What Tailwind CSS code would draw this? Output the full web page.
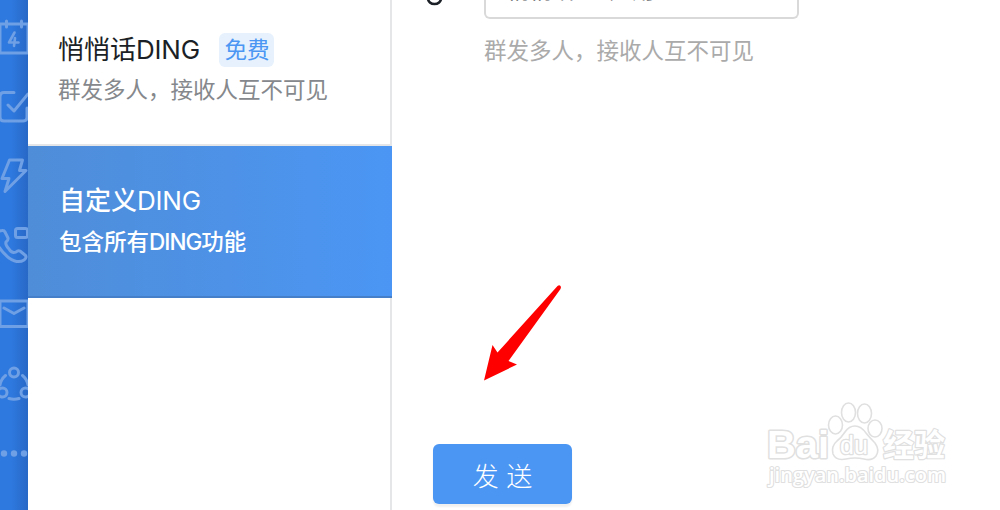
<!DOCTYPE html>
<html lang="zh-CN">
<head>
    <meta charset="UTF-8">
    <meta name="viewport" content="width=device-width, initial-scale=1.0">
    <title>DING</title>
    <script src="https://cdn.jsdelivr.net/npm/@tailwindcss/browser@4"></script>
</head>
<body class="relative flex h-[510px] w-[1000px] overflow-hidden bg-white font-['Inter','Noto_Sans_CJK_SC',sans-serif]">

    <!-- icon rail -->
    <nav class="h-full w-7 shrink-0 overflow-hidden bg-linear-to-r from-[#2e79df] from-40% to-[#2868c6]">
        <svg class="h-[510px] w-7" viewBox="0 0 28 510" fill="none" stroke="#6f9fe4" stroke-width="3" stroke-linecap="round" stroke-linejoin="round">
            <!-- calendar -->
            <path d="M0 24H28M0 53H28M0 24V53M28 24V53M6.500 21V27M21.500 21V27"/>
            <path d="M14.500 32.500L9 42.500H18.500M15 38L14 46" stroke-width="2.600"/>
            <!-- todo -->
            <path d="M14 92.500H4Q0 92.500 0 97V117Q0 121 4 121H23Q27 121 27 117V108M8 105L14 111L28 94"/>
            <!-- ding -->
            <path d="M9.500 160H22.500L19.500 170.500H26L5 191.500L9 178.500H2Z"/>
            <!-- phone -->
            <rect x="15.500" y="228.500" width="12" height="9" rx="2"/>
            <path d="M-3 231.500L2 230.500Q4 230 5 232L8 238Q8.500 240 6 242Q5 245 9 249Q12 254 16 252Q18 250 20 251L25.500 255.500Q27 257.500 24 260Q18 264 9 258Q3 253 -1 247"/>
            <!-- mail -->
            <path d="M0 301H28M0 326.500H28M0 301V326M28 301V326M4 308L14 313.500L24 308"/>
            <!-- contacts -->
            <circle cx="14" cy="372.500" r="4.500"/>
            <circle cx="2.500" cy="392.500" r="4.500"/>
            <circle cx="25.500" cy="392.500" r="4.500"/>
            <path d="M5.500 375.500Q1 379 0 385M22.500 375.500Q27 379 28 385M9 398.500Q14 400 19 398.500"/>
            <g fill="#6f9fe4" stroke="none">
                <circle cx="4" cy="453.500" r="3.200"/>
                <circle cx="14" cy="453.500" r="3.200"/>
                <circle cx="24" cy="453.500" r="3.200"/>
            </g>
        </svg>
    </nav>

    <!-- DING types -->
    <aside class="flex h-full w-[364px] shrink-0 flex-col">
        <div class="h-[146px] border-r-2 border-b-2 border-[#e4e6e8] pt-[30px] pl-[30px]">
            <div class="flex h-10 items-center">
                <h2 class="w-[161px] text-[26px] leading-10 whitespace-nowrap text-[#1b1f26]">悄悄话<span class="tracking-[-0.2px]">DING</span></h2>
                <span class="flex h-[34px] w-[55px] items-center justify-center rounded-md bg-[#e6f1fd] pl-px text-[22.500px] text-[#4b96f3]">免费</span>
            </div>
            <p class="mt-1 text-[22.500px] leading-8 text-[#85888c]">群发多人，接收人互不可见</p>
        </div>
        <div class="h-[152px] border-b-2 border-[#467fc9] bg-linear-to-r from-[#4f8dd8] to-[#4b96f4] pt-[35px] pl-[31px] text-white">
            <h2 class="text-[26px] leading-10 font-medium">自定义<span class="font-normal tracking-[-0.2px]">DING</span></h2>
            <p class="text-[22.500px] leading-[42px] font-medium">包含所有<span class="tracking-[-1px]">DING</span>功能</p>
        </div>
        <div class="flex-1 border-r-2 border-[#e4e6e8]"></div>
    </aside>

    <!-- form -->
    <main class="flex h-full flex-1 flex-col">
        <div class="flex h-[19px] items-end">
            <svg class="h-[19px] w-[92px]" viewBox="0 0 92 19" fill="none" stroke="#1b1f26" stroke-width="2.600"><ellipse cx="42.500" cy="-1.500" rx="6.500" ry="5.500"/></svg>
            <div class="flex h-[19px] w-[315px] items-end rounded-b-md border-2 border-t-0 border-[#d9d9d9] pl-[21px]">
                <span class="pb-[11px] text-[22.500px] leading-8 whitespace-pre text-[#55585c]">悄悄话  以应用</span>
            </div>
        </div>
        <p class="mt-4 pl-[92px] text-[22.500px] leading-8 text-[#aaaaaa]">群发多人，接收人互不可见</p>
        <button class="mt-auto mb-1.5 ml-[41px] h-[60px] w-[139px] rounded-md bg-[#4b96f3] pt-1 text-[26px] font-light text-white shadow-[0_3px_2px_#f0f0f0]">发 送</button>
    </main>

    <!-- pointer arrow -->
    <svg class="absolute top-[280px] left-[480px] h-[106px] w-[90px]" viewBox="480 280 90 106">
        <path fill="#ff0000" d="M484 380.500L492.500 345L497.500 352.500L557.500 286Q560 284 561 287L560.500 289L508.500 361L517 364.500Z"/>
    </svg>

    <!-- watermark -->
    <svg class="absolute top-[395px] left-[760px] h-[100px] w-[195px]" viewBox="760 395 195 100" fill="#ffffff" stroke="#e0e0e0" stroke-width="1.600" stroke-linejoin="round">
        <ellipse cx="835.500" cy="425" rx="7" ry="9"/>
        <ellipse cx="848.500" cy="412.500" rx="7" ry="9.500"/>
        <ellipse cx="864.500" cy="413.500" rx="7" ry="9.500"/>
        <ellipse cx="875" cy="428.500" rx="7" ry="8.500"/>
        <path d="M855 426Q861 426 866 433Q870 438 875 443Q880 450 876 456Q872 461 864 459Q855 457 846 459Q836 461 833 454Q831 446 837 441Q841 438 845 432Q849 426 855 426Z"/>
        <g font-family="Liberation Sans, Noto Sans CJK SC, sans-serif" font-weight="bold" paint-order="stroke">
            <text x="767" y="458" font-size="39" textLength="62" lengthAdjust="spacingAndGlyphs" stroke-width="3">Bai</text>
            <text x="840" y="454" font-size="25" font-weight="normal" textLength="28" lengthAdjust="spacingAndGlyphs" stroke-width="2.600">du</text>
            <text x="883" y="456" font-size="31" font-family="Noto Sans CJK SC" stroke-width="2.400">经验</text>
            <text x="769" y="482" font-size="20" font-family="Open Sans, sans-serif" font-weight="600" textLength="177" lengthAdjust="spacingAndGlyphs" stroke-width="2.200">jingyan.baidu.com</text>
        </g>
    </svg>
</body>
</html>
